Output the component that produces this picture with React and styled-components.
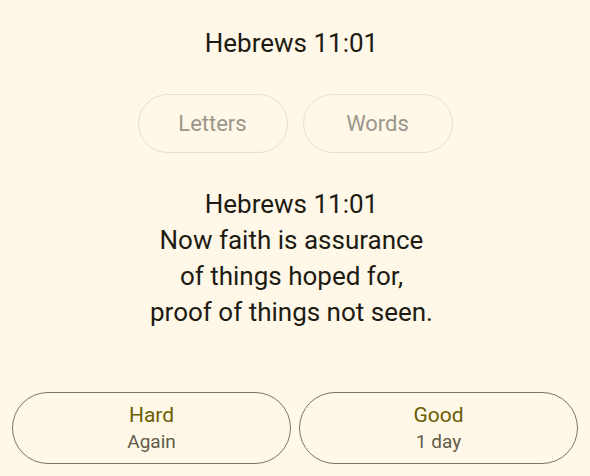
import * as React from "react"
import styled, { createGlobalStyle } from "styled-components"

const GlobalStyle = createGlobalStyle`
  html, body {
    margin: 0;
    padding: 0;
    background: #fff8e8;
  }
  body {
    font-family: Roboto, "Noto Sans", sans-serif;
  }
`

const Page = styled.div`
  display: flex;
  flex-direction: column;
  align-items: center;
  height: 476px;
  box-sizing: border-box;
  padding: 28px 12px 12px;
  color: #1e1b13;
`

// text blocks sit a few px left of centre in the original
const Title = styled.div`
  font-size: 26px;
  line-height: 30px;
  text-align: center;
  padding-right: 7px;
`

const ModeRow = styled.div`
  display: flex;
  gap: 15px;
  margin-top: 36px;
`

const ModeButton = styled.button`
  width: 150px;
  height: 59px;
  border-radius: 30px;
  border: 1px solid #e6dfce;
  background: transparent;
  color: #9b968b;
  font-family: inherit;
  font-size: 22px;
  cursor: pointer;
`

const Verse = styled.div`
  margin-top: 33px;
  font-size: 26px;
  line-height: 36px;
  text-align: center;
  padding-right: 7px;
`

const Spacer = styled.div`
  flex: 1;
`

const AnswerRow = styled.div`
  display: grid;
  grid-template-columns: 1fr 1fr;
  gap: 8px;
  width: 100%;
`

const AnswerButton = styled.button`
  height: 72px;
  border-radius: 36px;
  border: 1.5px solid #7b725f;
  background: transparent;
  font-family: inherit;
  display: flex;
  flex-direction: column;
  align-items: center;
  justify-content: center;
  gap: 2px;
  cursor: pointer;
`

const Label = styled.span`
  font-size: 21px;
  line-height: 26px;
  color: #6b5d00;
`

const Interval = styled.span`
  font-size: 19px;
  line-height: 24px;
  color: #615c48;
`

export default function App() {
  return (
    <Page>
      <GlobalStyle />
      <Title>Hebrews 11:01</Title>
      <ModeRow>
        <ModeButton>Letters</ModeButton>
        <ModeButton>Words</ModeButton>
      </ModeRow>
      <Verse>
        Hebrews 11:01<br />
        Now faith is assurance<br />
        of things hoped for,<br />
        proof of things not seen.
      </Verse>
      <Spacer />
      <AnswerRow>
        <AnswerButton>
          <Label>Hard</Label>
          <Interval>Again</Interval>
        </AnswerButton>
        <AnswerButton>
          <Label>Good</Label>
          <Interval>1 day</Interval>
        </AnswerButton>
      </AnswerRow>
    </Page>
  )
}
